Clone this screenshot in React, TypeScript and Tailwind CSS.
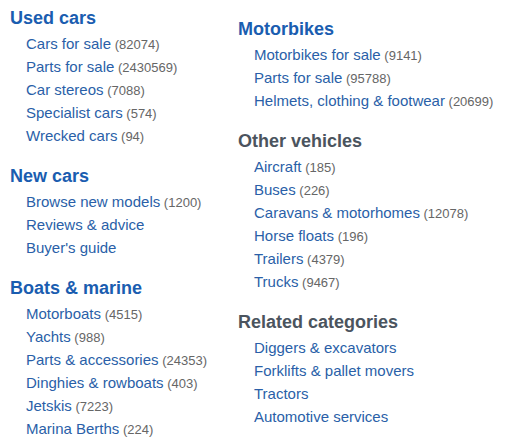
type Item = { label: string; count?: number };

type Section = {
  title: string;
  muted?: boolean;
  items: Item[];
};

const leftColumn: Section[] = [
  {
    title: "Used cars",
    items: [
      { label: "Cars for sale", count: 82074 },
      { label: "Parts for sale", count: 2430569 },
      { label: "Car stereos", count: 7088 },
      { label: "Specialist cars", count: 574 },
      { label: "Wrecked cars", count: 94 },
    ],
  },
  {
    title: "New cars",
    items: [
      { label: "Browse new models", count: 1200 },
      { label: "Reviews & advice" },
      { label: "Buyer's guide" },
    ],
  },
  {
    title: "Boats & marine",
    items: [
      { label: "Motorboats", count: 4515 },
      { label: "Yachts", count: 988 },
      { label: "Parts & accessories", count: 24353 },
      { label: "Dinghies & rowboats", count: 403 },
      { label: "Jetskis", count: 7223 },
      { label: "Marina Berths", count: 224 },
    ],
  },
];

const rightColumn: Section[] = [
  {
    title: "Motorbikes",
    items: [
      { label: "Motorbikes for sale", count: 9141 },
      { label: "Parts for sale", count: 95788 },
      { label: "Helmets, clothing & footwear", count: 20699 },
    ],
  },
  {
    title: "Other vehicles",
    muted: true,
    items: [
      { label: "Aircraft", count: 185 },
      { label: "Buses", count: 226 },
      { label: "Caravans & motorhomes", count: 12078 },
      { label: "Horse floats", count: 196 },
      { label: "Trailers", count: 4379 },
      { label: "Trucks", count: 9467 },
    ],
  },
  {
    title: "Related categories",
    muted: true,
    items: [
      { label: "Diggers & excavators" },
      { label: "Forklifts & pallet movers" },
      { label: "Tractors" },
      { label: "Automotive services" },
    ],
  },
];

function CategorySection({ section }: { section: Section }) {
  return (
    <div className="mb-[17px]">
      <h2
        className={
          section.muted
            ? "mb-[2px] text-[18px] font-bold leading-[24px] text-[#4b545e]"
            : "mb-[2px] text-[18px] font-bold leading-[24px] text-[#1a5db0]"
        }
      >
        {section.title}
      </h2>
      <ul className="pl-[16px]">
        {section.items.map((item) => (
          <li key={item.label} className="h-[23px] text-[15px] leading-[23px]">
            <a href="#" className="text-[#2a5fa8]">
              {item.label}
            </a>
            {item.count !== undefined ? (
              <span className="text-[13px] leading-none text-[#666]"> ({item.count})</span>
            ) : null}
          </li>
        ))}
      </ul>
    </div>
  );
}

export default function App() {
  return (
    <div
      className="flex h-[446px] w-[508px] bg-white pl-[10px] pt-[6px]"
      style={{ fontFamily: '"Liberation Sans", Arial, sans-serif' }}
    >
      <div className="w-[228px]">
        {leftColumn.map((section) => (
          <CategorySection key={section.title} section={section} />
        ))}
      </div>
      <div className="pt-[11px]">
        {rightColumn.map((section) => (
          <CategorySection key={section.title} section={section} />
        ))}
      </div>
    </div>
  );
}
